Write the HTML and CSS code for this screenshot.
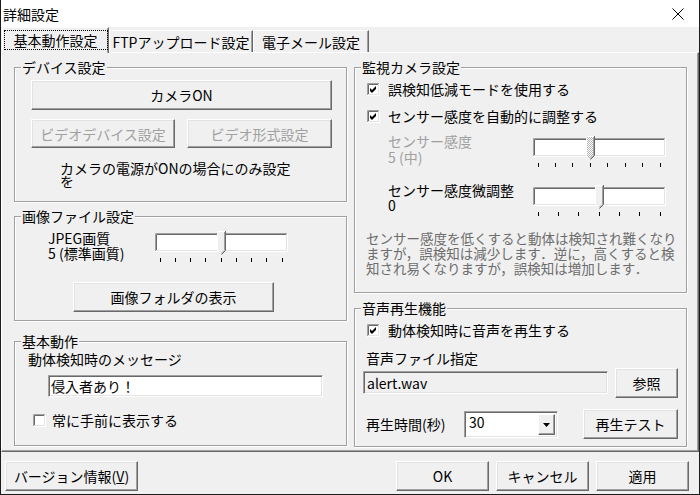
FILE: index.html
```html
<!DOCTYPE html>
<html lang="ja">
<head>
<meta charset="utf-8">
<title>詳細設定</title>
<link rel="stylesheet" href="styles.css">
</head>
<body>
<div class="window">
  <div class="titlebar">
    <span class="title">詳細設定</span>
    <svg class="close" width="12" height="12" viewBox="0 0 12 12"><path d="M0.5 0.5L11.5 11.5M11.5 0.5L0.5 11.5" stroke="#000" stroke-width="1" fill="none"/></svg>
  </div>
  <div class="tabs">
    <div class="tab sel t1"><span class="focus">基本動作設定</span></div>
    <div class="tab t2">FTPアップロード設定</div>
    <div class="tab t3">電子メール設定</div>
  </div>
  <div class="panel">
    <div class="col">
      <fieldset class="group g1">
        <legend>デバイス設定</legend>
        <button class="btn cam">カメラON</button>
        <div class="row2">
          <button class="btn dis vd">ビデオデバイス設定</button>
          <button class="btn dis vf">ビデオ形式設定</button>
        </div>
        <p class="note"><span class="ln">カメラの電源がONの場合にのみ設定</span><span class="ln">を</span></p>
      </fieldset>
      <fieldset class="group g2">
        <legend>画像ファイル設定</legend>
        <div class="qrow">
          <div class="qlabel"><span class="ln">JPEG画質</span><span class="ln">5 (標準画質)</span></div>
          <svg class="slider" width="134" height="34" viewBox="0 0 134 34">
            <rect x="1" y="2" width="132" height="18" fill="#fff"/>
            <path d="M1.5 20V2.5H133" stroke="#a0a0a0" fill="none"/>
            <path d="M2.5 19V3.5H132" stroke="#696969" fill="none"/>
            <path d="M2 19.5H132.5V3" stroke="#e3e3e3" fill="none"/>
            <path d="M1 20.5H133.5V2" stroke="#fff" fill="none"/>
            <path d="M63 0H71V19L67 23L63 19Z" fill="#f0f0f0"/>
            <path d="M63.5 19V0.5H70.5" stroke="#fff" fill="none"/>
            <path d="M63.5 19.5L67 23" stroke="#fff" fill="none"/>
            <path d="M70.5 1V19.2L67 22.7" stroke="#a0a0a0" fill="none"/>
            <path d="M71.5 0V19.5L67.5 23.5" stroke="#696969" fill="none"/>
            <path d="M6.5 27v4M21.5 27v4M36.5 27v4M51.5 27v4M67.5 27v4M82.5 27v4M97.5 27v4M112.5 27v4M128.5 27v4" stroke="#000" fill="none"/>
          </svg>
        </div>
        <button class="btn folder">画像フォルダの表示</button>
      </fieldset>
      <fieldset class="group g3">
        <legend>基本動作</legend>
        <div class="msglabel">動体検知時のメッセージ</div>
        <div class="textbox msg">侵入者あり！</div>
        <div class="cbrow top">
          <svg class="cb" width="13" height="13" viewBox="0 0 13 13">
            <rect width="13" height="13" fill="#fff"/>
            <path d="M0.5 12V0.5H12" stroke="#a0a0a0" fill="none"/>
            <path d="M1.5 11V1.5H11" stroke="#696969" fill="none"/>
            <path d="M1 11.5H11.5V1" stroke="#e3e3e3" fill="none"/>
          </svg>
          <span>常に手前に表示する</span>
        </div>
      </fieldset>
    </div>
    <div class="col">
      <fieldset class="group g4">
        <legend>監視カメラ設定</legend>
        <div class="cbrow r1">
          <svg class="cb" width="13" height="13" viewBox="0 0 13 13">
            <rect width="13" height="13" fill="#fff"/>
            <path d="M0.5 12V0.5H12" stroke="#a0a0a0" fill="none"/>
            <path d="M1.5 11V1.5H11" stroke="#696969" fill="none"/>
            <path d="M1 11.5H11.5V1" stroke="#e3e3e3" fill="none"/>
            <path d="M3 5L5 7L9 3V6L5 10L3 8Z" fill="#000"/>
          </svg>
          <span>誤検知低減モードを使用する</span>
        </div>
        <div class="cbrow r2">
          <svg class="cb" width="13" height="13" viewBox="0 0 13 13">
            <rect width="13" height="13" fill="#fff"/>
            <path d="M0.5 12V0.5H12" stroke="#a0a0a0" fill="none"/>
            <path d="M1.5 11V1.5H11" stroke="#696969" fill="none"/>
            <path d="M1 11.5H11.5V1" stroke="#e3e3e3" fill="none"/>
            <path d="M3 5L5 7L9 3V6L5 10L3 8Z" fill="#000"/>
          </svg>
          <span>センサー感度を自動的に調整する</span>
        </div>
        <div class="srow sens">
          <div class="slabel dim"><span class="ln">センサー感度</span><span class="ln">5 (中)</span></div>
          <svg class="slider" width="134" height="34" viewBox="0 0 134 34">
            <defs>
              <pattern id="hatch" width="2" height="2" patternUnits="userSpaceOnUse">
                <rect width="2" height="2" fill="#fff"/>
                <rect width="1" height="1" fill="#b4b4b4"/>
                <rect x="1" y="1" width="1" height="1" fill="#b4b4b4"/>
              </pattern>
            </defs>
            <rect x="1" y="2" width="132" height="18" fill="#fff"/>
            <path d="M1.5 20V2.5H133" stroke="#a0a0a0" fill="none"/>
            <path d="M2.5 19V3.5H132" stroke="#696969" fill="none"/>
            <path d="M2 19.5H132.5V3" stroke="#e3e3e3" fill="none"/>
            <path d="M1 20.5H133.5V2" stroke="#fff" fill="none"/>
            <path d="M54 0H62V19L58 23L54 19Z" fill="url(#hatch)"/>
            <path d="M54.5 19V0.5H61.5" stroke="#fff" fill="none"/>
            <path d="M61.5 1V19.2L58 22.7" stroke="#a0a0a0" fill="none"/>
            <path d="M62.5 0V19.5L58.5 23.5" stroke="#696969" fill="none"/>
            <path d="M6.5 27v4M23.5 27v4M40.5 27v4M58.5 27v4M75.5 27v4M93.5 27v4M110.5 27v4M128.5 27v4" stroke="#000" fill="none"/>
          </svg>
        </div>
        <div class="srow fine">
          <div class="slabel fl"><span class="ln">センサー感度微調整</span><span class="ln">0</span></div>
          <svg class="slider" width="134" height="34" viewBox="0 0 134 34">
            <rect x="1" y="2" width="132" height="18" fill="#fff"/>
            <path d="M1.5 20V2.5H133" stroke="#a0a0a0" fill="none"/>
            <path d="M2.5 19V3.5H132" stroke="#696969" fill="none"/>
            <path d="M2 19.5H132.5V3" stroke="#e3e3e3" fill="none"/>
            <path d="M1 20.5H133.5V2" stroke="#fff" fill="none"/>
            <path d="M63 0H71V19L67 23L63 19Z" fill="#f0f0f0"/>
            <path d="M63.5 19V0.5H70.5" stroke="#fff" fill="none"/>
            <path d="M63.5 19.5L67 23" stroke="#fff" fill="none"/>
            <path d="M70.5 1V19.2L67 22.7" stroke="#a0a0a0" fill="none"/>
            <path d="M71.5 0V19.5L67.5 23.5" stroke="#696969" fill="none"/>
            <path d="M6.5 27v4M26.5 27v4M46.5 27v4M67.5 27v4M87.5 27v4M107.5 27v4M128.5 27v4" stroke="#000" fill="none"/>
          </svg>
        </div>
        <p class="hint"><span class="ln">センサー感度を低くすると動体は検知され難くなり</span><span class="ln">ますが，誤検知は減少します．逆に，高くすると検</span><span class="ln">知され易くなりますが，誤検知は増加します．</span></p>
      </fieldset>
      <fieldset class="group g5">
        <legend>音声再生機能</legend>
        <div class="cbrow r3">
          <svg class="cb" width="13" height="13" viewBox="0 0 13 13">
            <rect width="13" height="13" fill="#fff"/>
            <path d="M0.5 12V0.5H12" stroke="#a0a0a0" fill="none"/>
            <path d="M1.5 11V1.5H11" stroke="#696969" fill="none"/>
            <path d="M1 11.5H11.5V1" stroke="#e3e3e3" fill="none"/>
            <path d="M3 5L5 7L9 3V6L5 10L3 8Z" fill="#000"/>
          </svg>
          <span>動体検知時に音声を再生する</span>
        </div>
        <div class="flabel">音声ファイル指定</div>
        <div class="filerow">
          <div class="textbox file">alert.wav</div>
          <button class="btn ref">参照</button>
        </div>
        <div class="timerow">
          <div class="tlabel">再生時間(秒)</div>
          <div class="combo">
            <span class="cval">30</span>
            <span class="drop"><svg width="7" height="4" viewBox="0 0 7 4"><path d="M0 0H7L3.5 4Z" fill="#000"/></svg></span>
          </div>
          <button class="btn test">再生テスト</button>
        </div>
      </fieldset>
    </div>
  </div>
  <div class="footer">
    <button class="btn ver">バージョン情報(<u>V</u>)</button>
    <button class="btn fb ok">OK</button>
    <button class="btn fb">キャンセル</button>
    <button class="btn fb">適用</button>
  </div>
</div>
</body>
</html>
```

FILE: styles.css
```css
* { box-sizing: border-box; }
html, body { margin: 0; padding: 0; }
body {
  width: 700px;
  height: 495px;
  overflow: hidden;
  background: #fff;
  color: #000;
  font-family: "Noto Sans CJK JP", "Noto Sans", sans-serif;
  font-size: 14px;
}
.window {
  width: 700px;
  height: 495px;
  background: #f0f0f0;
  border: 1px solid #1c1c1c;
  border-top: 0;
  display: flex;
  flex-direction: column;
}
.titlebar {
  flex: none;
  height: 27px;
  background: #fff;
  display: flex;
  align-items: center;
  justify-content: space-between;
  padding: 0 15px 0 2px;
}
.title { font-size: 14px; line-height: 16px; }
.close { display: block; }

.tabs {
  flex: none;
  height: 25px;
  display: flex;
  align-items: flex-end;
  padding-left: 1px;
  position: relative;
  z-index: 1;
}
.tab {
  height: 22px;
  display: flex;
  align-items: center;
  justify-content: center;
  font-size: 14px;
  line-height: 16px;
  border-top: 1px solid #fff;
  border-left: 1px solid #fff;
  border-right: 1px solid #696969;
  box-shadow: inset -1px 0 0 #a0a0a0;
  background: #f0f0f0;
  white-space: nowrap;
}
.tab.sel { height: 26px; margin-bottom: -1px; padding-bottom: 2px; }
.t1 { width: 107px; }
.t2 { width: 144px; }
.t3 { width: 116px; }
.focus { outline: 1px dotted #000; outline-offset: 0; padding: 1px 9px; }

.ln { display: block; }

.panel {
  flex: none;
  height: 400px;
  border: 1px solid;
  border-color: #fff #696969 #696969 #fff;
  box-shadow: inset -1px -1px 0 #a0a0a0;
  padding: 6px 0 0 12px;
  display: flex;
  gap: 7px;
}
.col { width: 333px; display: flex; flex-direction: column; }

.group {
  margin: 0;
  padding: 0;
  min-width: 0;
  border: 1px solid #a0a0a0;
  box-shadow: inset 1px 1px 0 #fff, 1px 1px 0 #fff;
}
.group legend {
  margin-left: 6px;
  padding: 0 1px;
  font-size: 14px;
  line-height: 16px;
  background: #f0f0f0;
}
.g1 { height: 143px; }
.g2 { height: 113px; margin-top: 6px; }
.g3 { height: 113px; margin-top: 12px; }
.g4 { height: 234px; }
.g5 { height: 147px; margin-top: 7px; }

.btn {
  display: flex;
  align-items: center;
  justify-content: center;
  padding: 0;
  margin: 0;
  font-family: inherit;
  font-size: 14px;
  line-height: 16px;
  color: #000;
  background: #f0f0f0;
  border: 1px solid;
  border-color: #fff #696969 #696969 #fff;
  box-shadow: inset -1px -1px 0 #a0a0a0, inset 1px 1px 0 #e3e3e3;
  white-space: nowrap;
}
.btn.dis { color: #a0a0a0; }

.cam { width: 301px; height: 30px; margin: 5px 0 0 16px; }
.row2 { display: flex; gap: 12px; margin: 9px 0 0 16px; }
.vd { width: 144px; height: 29px; }
.vf { width: 145px; height: 29px; }
.note { margin: 14px 0 0 45px; line-height: 13px; font-size: 14px; }

.qrow { display: flex; margin-top: 7px; }
.qlabel { width: 106px; margin-left: 33px; line-height: 15px; }
.slider { display: block; flex: none; }
.folder { width: 201px; height: 30px; margin: 17px 0 0 58px; }

.msglabel { margin: 2px 0 0 13px; line-height: 16px; }
.textbox {
  border: 1px solid;
  border-color: #a0a0a0 #fff #fff #a0a0a0;
  box-shadow: inset 1px 1px 0 #696969, inset -1px -1px 0 #e3e3e3;
  background: #fff;
  line-height: 16px;
  display: flex;
  align-items: center;
  white-space: nowrap;
}
.msg { width: 275px; height: 22px; margin: 8px 0 0 33px; padding-left: 2px; }

.cbrow { display: flex; align-items: center; height: 16px; line-height: 16px; }
.cbrow .cb { display: block; flex: none; }
.cbrow.top { margin: 15px 0 0 18px; }
.cbrow.top span { margin-left: 6px; }
.cbrow.r1 { margin: 6px 0 0 12px; }
.cbrow.r2 { margin: 11px 0 0 12px; }
.cbrow.r3 { margin: 6px 0 0 12px; }
.r1 span, .r2 span, .r3 span { margin-left: 8px; }

.srow { display: flex; }
.sens { margin-top: 9px; }
.fine { margin-top: 13px; }
.slabel { width: 144px; margin-left: 33px; line-height: 16px; }
.slabel.fl { line-height: 15px; }
.sens .slider { margin-top: 3px; }
.fine .slider { margin-top: 2px; }
.dim { color: #a0a0a0; }
.hint {
  margin: 12px 0 0 11px;
  font-size: 13.5px;
  line-height: 15px;
  color: #6d6d6d;
  white-space: nowrap;
}

.flabel { margin: 12px 0 0 11px; line-height: 16px; }
.filerow { display: flex; align-items: flex-start; margin: 2px 0 0 8px; gap: 7px; }
.file { width: 245px; height: 23px; margin-top: 3px; background: #f0f0f0; padding-left: 3px; }
.ref { width: 63px; height: 30px; }
.timerow { display: flex; align-items: flex-start; margin: 11px 0 0 11px; }
.tlabel { width: 98px; margin-top: 7px; line-height: 16px; }
.combo {
  width: 94px;
  height: 27px;
  margin-top: 2px;
  display: flex;
  border: 1px solid;
  border-color: #a0a0a0 #fff #fff #a0a0a0;
  box-shadow: inset 1px 1px 0 #696969, inset -1px -1px 0 #e3e3e3;
  background: #fff;
  padding: 2px;
}
.cval { flex: 1; padding-left: 2px; line-height: 16px; }
.drop {
  width: 17px;
  display: flex;
  align-items: center;
  justify-content: center;
  background: #f0f0f0;
  border: 1px solid;
  border-color: #fff #696969 #696969 #fff;
  box-shadow: inset -1px -1px 0 #a0a0a0;
}
.drop svg { display: block; }
.test { width: 95px; height: 30px; margin-left: 25px; }

.footer {
  flex: none;
  height: 42px;
  display: flex;
  align-items: flex-start;
  padding: 9px 10px 0 4px;
  gap: 7px;
}
.ver { width: 133px; height: 30px; }
.fb { width: 93px; height: 30px; }
.ok { margin-left: auto; }
```
